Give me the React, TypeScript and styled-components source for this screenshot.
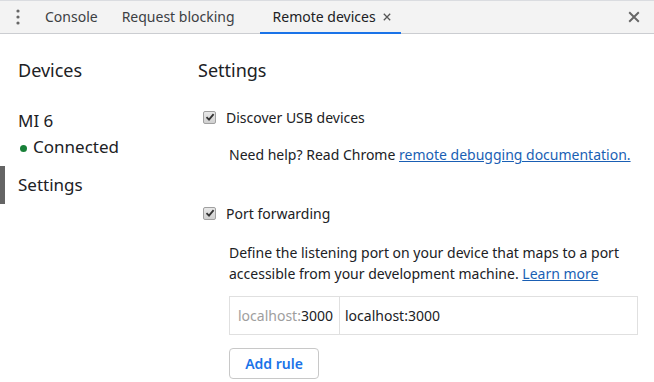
import React from 'react'
import styled, { createGlobalStyle } from 'styled-components'

const GlobalStyle = createGlobalStyle`
  body {
    margin: 0;
    font-family: "Noto Sans", "Open Sans", sans-serif;
    background-color: #fff;
    color: #202124;
  }
`

const TabBar = styled.div`
	height: 32px;
	background-color: #f3f3f3;
	border-top: 1px solid #dadce0;
	border-bottom: 1px solid #cbcdd1;
	display: flex;
	align-items: stretch;
	font-size: 14px;
	color: #3c4043;
`

const MenuDots = styled.div`
	width: 30px;
	display: flex;
	align-items: center;
	justify-content: center;
	padding-left: 3px;
`

const Tab = styled.div<{ $active?: boolean }>`
	display: flex;
	align-items: center;
	gap: 7px;
	padding: 0 ${(p) => (p.$active ? '10px' : '12px')} 0 ${(p) => (p.$active ? '13px' : '12px')};
	margin-left: ${(p) => (p.$active ? '13px' : '0')};
	color: ${(p) => (p.$active ? '#202124' : '#3c4043')};
	border-bottom: 2px solid ${(p) => (p.$active ? '#1a73e8' : 'transparent')};
	margin-bottom: -1px;
`

const CloseAll = styled.div`
	margin-left: auto;
	width: 40px;
	display: flex;
	align-items: center;
	justify-content: center;
`

const Body = styled.div`
	display: flex;
`

const Sidebar = styled.nav`
	width: 198px;
	padding-top: 18px;
	display: flex;
	flex-direction: column;
`

const SideTitle = styled.div`
	font-size: 18px;
	padding-left: 18px;
	height: 36px;
	line-height: 36px;
	margin-bottom: 20px;
`

const DeviceName = styled.div`
	font-size: 17px;
	padding-left: 18px;
	line-height: 26px;
`

const Status = styled.div`
	font-size: 17px;
	padding-left: 20px;
	line-height: 26px;
	display: flex;
	align-items: center;
	gap: 6px;
`

const Dot = styled.span`
	width: 7px;
	height: 7px;
	border-radius: 50%;
	background-color: #188038;
	margin-top: 2px;
`

const SideItem = styled.div<{ $selected?: boolean }>`
	margin-top: 6px;
	height: 38px;
	line-height: 38px;
	font-size: 17px;
	padding-left: 13px;
	border-left: 5px solid ${(p) => (p.$selected ? '#646464' : 'transparent')};
`

const Content = styled.main`
	flex: 1;
	padding-top: 18px;
	padding-right: 16px;
`

const Heading = styled.h2`
	margin: 0 0 17px;
	font-size: 18px;
	font-weight: normal;
	height: 36px;
	line-height: 36px;
`

const CheckRow = styled.label`
	display: flex;
	align-items: center;
	gap: 10px;
	font-size: 14px;
	height: 24px;
	padding-left: 5px;
`

const Box = styled.span`
	box-sizing: border-box;
	width: 13px;
	height: 13px;
	border: 1px solid #a0a0a0;
	border-radius: 2px;
	background: linear-gradient(#e8e8e8, #d0d0d0);
	display: flex;
	align-items: center;
	justify-content: center;
`

const Indent = styled.div`
	padding-left: 31px;
	font-size: 14px;
	line-height: 21px;
`

const HelpText = styled(Indent)`
	margin-top: 15px;
	margin-bottom: 36px;
	white-space: nowrap;
`

const Para = styled(Indent)`
	margin-top: 17px;
`

const DocLink = styled.a`
	color: #1a5fb4;
	text-decoration: underline;
`

const RuleTable = styled.div`
	margin: 12px 0 0 31px;
	height: 37px;
	border: 1px solid #e0e0e0;
	display: flex;
	font-size: 14px;
`

const PortCell = styled.div`
	width: 101px;
	padding-left: 8px;
	border-right: 1px solid #e0e0e0;
	display: flex;
	align-items: center;
`

const Dim = styled.span`
	color: #9e9e9e;
`

const TargetCell = styled.div`
	padding-left: 5px;
	display: flex;
	align-items: center;
`

const AddButton = styled.button`
	margin: 13px 0 0 31px;
	width: 90px;
	height: 31px;
	border: 1px solid #c8c8c8;
	border-radius: 4px;
	background-color: #fff;
	color: #1a73e8;
	font-family: inherit;
	font-size: 14px;
	font-weight: 600;
`

const Cross = ({ size, color }: { size: number; color: string }) => (
	<svg width={size} height={size} viewBox='0 0 10 10'>
		<path d='M1 1L9 9M9 1L1 9' stroke={color} strokeWidth='1.6' />
	</svg>
)

const Check = () => (
	<svg width='10' height='10' viewBox='0 0 10 10'>
		<path d='M1.5 5.2L4 7.6L8.6 2.2' stroke='#333' strokeWidth='1.8' fill='none' />
	</svg>
)

const App: React.FC = () => {
	return (
		<>
			<GlobalStyle />
			<TabBar>
				<MenuDots>
					<svg width='4' height='16' viewBox='0 0 4 16'>
						<circle cx='2' cy='2' r='1.6' fill='#666' />
						<circle cx='2' cy='8' r='1.6' fill='#666' />
						<circle cx='2' cy='14' r='1.6' fill='#666' />
					</svg>
				</MenuDots>
				<Tab>Console</Tab>
				<Tab>Request blocking</Tab>
				<Tab $active>
					Remote devices
					<Cross size={8} color='#555' />
				</Tab>
				<CloseAll>
					<Cross size={12} color='#666' />
				</CloseAll>
			</TabBar>
			<Body>
				<Sidebar>
					<SideTitle>Devices</SideTitle>
					<DeviceName>MI 6</DeviceName>
					<Status>
						<Dot />
						Connected
					</Status>
					<SideItem $selected>Settings</SideItem>
				</Sidebar>
				<Content>
					<Heading>Settings</Heading>
					<CheckRow>
						<Box>
							<Check />
						</Box>
						Discover USB devices
					</CheckRow>
					<HelpText>
						Need help? Read Chrome <DocLink>remote debugging documentation.</DocLink>
					</HelpText>
					<CheckRow>
						<Box>
							<Check />
						</Box>
						Port forwarding
					</CheckRow>
					<Para>
						Define the listening port on your device that maps to a port accessible from your
						development machine. <DocLink>Learn more</DocLink>
					</Para>
					<RuleTable>
						<PortCell>
							<Dim>localhost:</Dim>3000
						</PortCell>
						<TargetCell>localhost:3000</TargetCell>
					</RuleTable>
					<AddButton>Add rule</AddButton>
				</Content>
			</Body>
		</>
	)
}

export default App
